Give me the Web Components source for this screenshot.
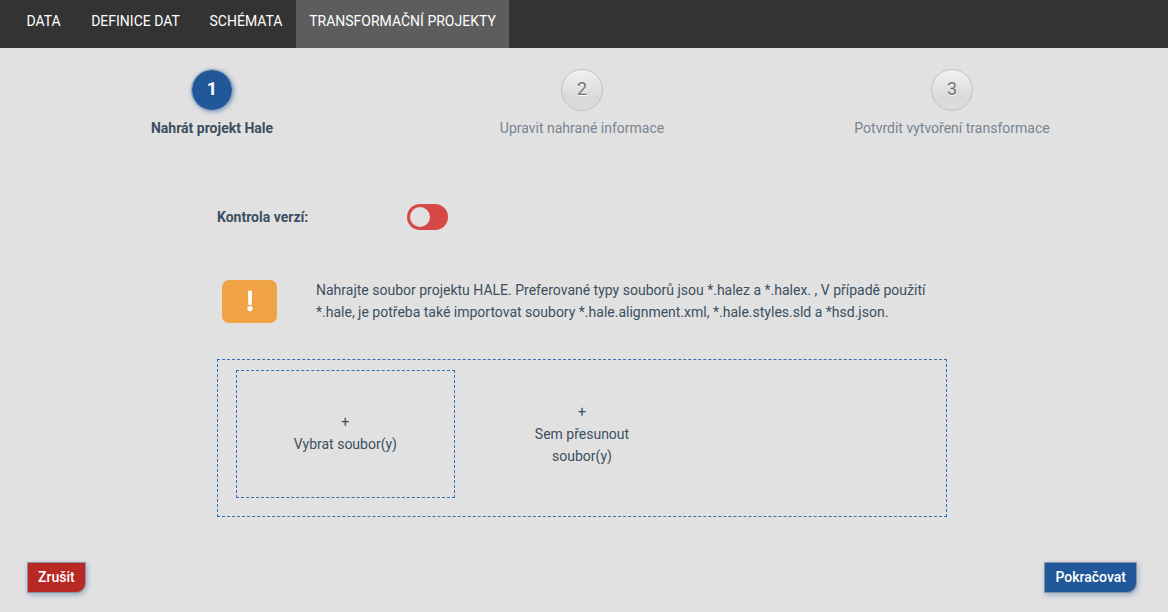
<!DOCTYPE html>
<html lang="cs">
<head>
<meta charset="utf-8">
<meta name="viewport" content="width=device-width, initial-scale=1">
<title>Transformační projekty</title>
<style>
  body {
    margin: 0;
    background: #e1e1e1;
    color: #3c4f60;
    font: 14px/22px Roboto, "Noto Sans", sans-serif;
  }
</style>
</head>
<body>
<project-wizard></project-wizard>

<script>
const define = (name, html, setup) => customElements.define(name, class extends HTMLElement {
  connectedCallback() {
    if (this.shadowRoot) return;
    this.attachShadow({ mode: 'open' }).innerHTML = html;
    if (setup) setup(this, this.shadowRoot);
  }
});

define('nav-item', `
  <style>
    :host { display: flex; }
    a {
      box-sizing: border-box; width: 100%; height: 48px; padding-top: 10px;
      color: #fff; text-align: center; text-decoration: none; white-space: nowrap;
    }
    :host([active]) a { background: #5d5d5d; }
  </style>
  <a href="#"><slot></slot></a>`,
  (host, root) => {
    if (host.hasAttribute('active')) root.querySelector('a').setAttribute('aria-current', 'page');
  });

define('top-nav', `
  <style>
    :host { display: block; background: #333; }
    nav { display: grid; grid-template-columns: 63px 121px 100px 213px; padding-left: 12px; }
  </style>
  <nav>
    <nav-item>DATA</nav-item>
    <nav-item>DEFINICE DAT</nav-item>
    <nav-item>SCHÉMATA</nav-item>
    <nav-item active>TRANSFORMAČNÍ PROJEKTY</nav-item>
  </nav>`);

define('wizard-step', `
  <style>
    :host { display: flex; flex-direction: column; align-items: center; gap: 6px; color: #788591; }
    .number {
      box-sizing: border-box; width: 42px; height: 42px; border: 1px solid #c2c2c2; border-radius: 50%;
      background: linear-gradient(#f1f1f1, #d9d9d9 70%, #dcdcdc);
      color: #737373; font-size: 18px; line-height: 38px; text-align: center;
      text-shadow: 0 1px 0 #fff;
    }
    :host([active]) { color: #3c4f60; font-weight: 700; }
    :host([active]) .number {
      border-color: #8fa3bb; background: #20589a; background-clip: padding-box;
      color: #fff; text-shadow: none; box-shadow: 1px 1px 4px #20589a80;
    }
  </style>
  <div class="number"></div>
  <div><slot></slot></div>`,
  (host, root) => { root.querySelector('.number').textContent = host.getAttribute('number'); });

define('toggle-switch', `
  <style>
    :host { display: grid; grid-template-columns: 190px 1fr; align-items: center; }
    label { font-weight: 700; }
    input {
      appearance: none; display: flex; align-items: center; box-sizing: border-box;
      width: 41px; height: 26px; margin: 0; padding: 0 3px;
      border-radius: 13px; background: #d64845; cursor: pointer;
    }
    input::before { content: ""; width: 20px; height: 20px; border-radius: 50%; background: #e1e1e1; }
    input:checked { justify-content: flex-end; background: #3c9a5f; }
  </style>
  <label for="switch"><slot></slot></label>
  <input id="switch" type="checkbox" role="switch">`);

define('info-note', `
  <style>
    :host { display: flex; align-items: center; gap: 39px; padding-left: 5px; }
    .badge {
      display: flex; flex: none; align-items: center; justify-content: center;
      width: 55px; height: 43px; border-radius: 7px; background: #efa345;
    }
    p { margin: 0; }
  </style>
  <div class="badge">
    <svg width="8" height="22" viewBox="0 0 8 22" aria-hidden="true" fill="#fff">
      <path d="M2 1.2Q2 .8 2.4.8h3.2q.4 0 .4.4l-.3 13q0 .7-.6.7H2.9q-.6 0-.6-.7z"/>
      <circle cx="4" cy="18.6" r="2.6"/>
    </svg>
  </div>
  <p><slot></slot></p>`);

define('file-drop', `
  <style>
    :host {
      display: grid; grid-template-columns: repeat(3, 1fr); box-sizing: border-box;
      min-height: 158px; border: 1px dashed #3470b0; text-align: center;
    }
    button {
      margin: 10px 6px 18px 18px; padding: 0 0 2px; border: 1px dashed #3470b0;
      background: none; color: inherit; font: inherit; cursor: pointer;
    }
    .drop { align-self: center; padding-bottom: 8px; }
  </style>
  <button type="button">+<br>Vybrat soubor(y)</button>
  <div class="drop">+<br>Sem přesunout<br>soubor(y)</div>`);

define('action-button', `
  <style>
    :host { display: block; }
    button {
      box-sizing: border-box; height: 31px; padding: 0 10px 2px; border: 1px solid #8793a0;
      border-radius: 0 0 10px 0; background: #20589a; color: #fff;
      font: inherit; font-weight: 500; white-space: nowrap; cursor: pointer;
      box-shadow: 1px 2px 5px #20589a60;
    }
    :host([kind="cancel"]) button { background: #b82825; }
  </style>
  <button type="button"><slot></slot></button>`);

define('project-wizard', `
  <style>
    :host { display: block; }
    main { padding: 21px 31px 19px 27px; }
    .steps { display: grid; grid-template-columns: repeat(3, 1fr); }
    .form { display: grid; grid-template-columns: 1fr 4fr 1fr; margin-top: 65px; }
    .fields { grid-column: 2; padding: 0 5px; }
    info-note { margin: 49px 0 36px; }
    .actions { display: flex; justify-content: space-between; margin-top: 45px; }
  </style>
  <top-nav></top-nav>
  <main>
    <div class="steps">
      <wizard-step number="1" active>Nahrát projekt Hale</wizard-step>
      <wizard-step number="2">Upravit nahrané informace</wizard-step>
      <wizard-step number="3">Potvrdit vytvoření transformace</wizard-step>
    </div>
    <div class="form">
      <div class="fields">
        <toggle-switch>Kontrola verzí:</toggle-switch>
        <info-note>Nahrajte soubor projektu HALE. Preferované typy souborů jsou *.halez a *.halex. , V případě použití *.hale, je potřeba také importovat soubory *.hale.alignment.xml, *.hale.styles.sld a *hsd.json.</info-note>
        <file-drop></file-drop>
      </div>
    </div>
    <div class="actions">
      <action-button kind="cancel">Zrušit</action-button>
      <action-button>Pokračovat</action-button>
    </div>
  </main>`);
</script>
</body>
</html>
